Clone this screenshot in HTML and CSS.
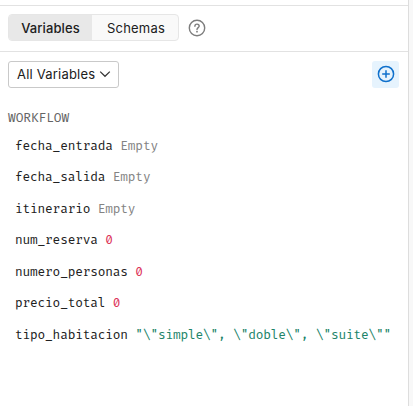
FILE: index.html
```html
<!DOCTYPE html>
<html lang="en">
<head>
<meta charset="utf-8">
<title>Variables</title>
<link rel="stylesheet" href="styles.css">
</head>
<body>
<main class="panel">
  <header class="toolbar">
    <div class="tabs"><button class="tab active">Variables</button><button class="tab">Schemas</button></div>
    <svg class="help" width="18" height="18" viewBox="0 0 18 18" fill="none" stroke="#7d7d7d" stroke-width="1.4"><circle cx="9" cy="9" r="7.7"/><path d="M6.9 7.2C6.9 4.5 11.2 4.5 11.2 7.1C11.2 8.6 9 8.7 9 10.5" stroke-linecap="round"/><circle cx="9" cy="12.7" r=".9" fill="#7d7d7d" stroke="none"/></svg>
  </header>
  <div class="filters">
    <button class="select">All Variables<svg width="12" height="12" viewBox="0 0 12 12" fill="none" stroke="#333" stroke-width="1.2"><path d="M1.2 3.6L6 8.3L10.8 3.6"/></svg></button>
    <button class="add"><svg width="18" height="18" viewBox="0 0 18 18" fill="none" stroke="#0f70cc" stroke-width="1.5"><circle cx="9" cy="9" r="7.6"/><path d="M9 5.2V12.8M5.2 9H12.8"/></svg></button>
  </div>
  <section class="variables">
    <h2>WORKFLOW</h2>
    <ul>
      <li>fecha_entrada <span class="empty">Empty</span></li>
      <li>fecha_salida <span class="empty">Empty</span></li>
      <li>itinerario <span class="empty">Empty</span></li>
      <li>num_reserva <span class="number">0</span></li>
      <li>numero_personas <span class="number">0</span></li>
      <li>precio_total <span class="number">0</span></li>
      <li>tipo_habitacion <span class="string">"\"simple\", \"doble\", \"suite\""</span></li>
    </ul>
  </section>
</main>
</body>
</html>
```
FILE: styles.css
```css
* { box-sizing: border-box; }
body {
  margin: 0;
  height: 406px;
  overflow: hidden;
  background: #f8f8f8;
  color: #202020;
  font-family: Inter, sans-serif;
}
button { font: inherit; color: inherit; border: 0; padding: 0; }
.panel {
  width: 409px;
  height: 406px;
  padding-top: 5px;
  background: #fff;
  border-right: 1px solid #ddd;
}
.toolbar {
  height: 47px;
  display: flex;
  align-items: center;
  gap: 9px;
  padding: 0 0 2px 8px;
  border-top: 1px solid #e2e2e2;
  border-bottom: 1px solid #e2e2e2;
}
.tabs {
  display: flex;
  width: 171px;
  height: 27px;
  border: 1px solid #e6e6e6;
  border-radius: 4px;
  background: #f9f9f9;
  overflow: hidden;
  font-size: 13px;
}
.tab { flex: 1; padding-left: 2px; background: transparent; letter-spacing: .2px; }
.tab.active { flex: 0 0 83px; padding: 0; background: #e8e8e8; font-weight: 500; letter-spacing: .1px; }
.filters {
  display: flex;
  justify-content: space-between;
  padding: 9px 9px 0 8px;
}
.select {
  display: flex;
  align-items: center;
  justify-content: space-between;
  width: 111px;
  height: 27px;
  padding: 0 7px 1px 8px;
  border: 1px solid #c9c9c9;
  border-radius: 3px;
  background: #fff;
  font-size: 13px;
  letter-spacing: .2px;
  white-space: nowrap;
}
.add {
  display: flex;
  align-items: center;
  justify-content: center;
  width: 27px;
  height: 27px;
  padding-bottom: 1px;
  border-radius: 3px;
  background: #e6f3fd;
}
.variables {
  padding: 22px 0 0 8px;
  font: 12.5px "Fira Code", "DejaVu Sans Mono", monospace;
  letter-spacing: -.17px;
}
h2 {
  margin: 0;
  font: inherit;
  line-height: 16px;
  letter-spacing: -.05px;
  color: #646464;
}
ul { margin: 4.5px 0 0; padding: 0 0 0 7px; list-style: none; }
li { height: 31.5px; line-height: 31.5px; white-space: nowrap; }
.empty { color: #838383; }
.number { color: #dc3057; }
.string { color: #208368; }
```
